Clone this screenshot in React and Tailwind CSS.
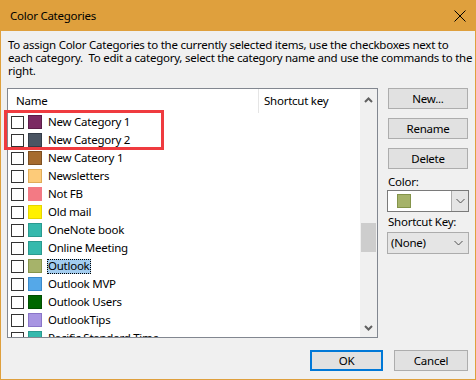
import React from "react";

const font = { fontFamily: '"Noto Sans", "Open Sans", sans-serif' };

const categories = [
  { name: "New Category 1", fill: "bg-[#7b2a63]", edge: "border-[#5c1d49]" },
  { name: "New Category 2", fill: "bg-[#4b5563]", edge: "border-[#343c48]" },
  { name: "New Cateory 1", fill: "bg-[#a66b2e]", edge: "border-[#7d5022]" },
  { name: "Newsletters", fill: "bg-[#fdcb79]", edge: "border-[#e0ac58]" },
  { name: "Not FB", fill: "bg-[#f37a84]", edge: "border-[#f37a84]" },
  { name: "Old mail", fill: "bg-[#fff100]", edge: "border-[#e6d500]" },
  { name: "OneNote book", fill: "bg-[#35b9ad]", edge: "border-[#2a9a8f]" },
  { name: "Online Meeting", fill: "bg-[#35b9ad]", edge: "border-[#2a9a8f]" },
  { name: "Outlook", fill: "bg-[#a6b36a]", edge: "border-[#84944a]", selected: true },
  { name: "Outlook MVP", fill: "bg-[#55a8e8]", edge: "border-[#3a8acb]" },
  { name: "Outlook Users", fill: "bg-[#006600]", edge: "border-[#004d00]" },
  { name: "OutlookTips", fill: "bg-[#a895e2]", edge: "border-[#8a75c8]" },
  { name: "Pacific Standard Time", fill: "bg-[#35b9ad]", edge: "border-[#2a9a8f]" },
];

const Chevron = ({ className = "" }) => (
  <svg width="9" height="6" viewBox="0 0 9 6" className={className}>
    <polyline points="0.5,1 4.5,5 8.5,1" fill="none" stroke="currentColor" strokeWidth="1" />
  </svg>
);

const ScrollArrow = ({ up = false }) => (
  <svg width="9" height="6" viewBox="0 0 9 6">
    <polyline
      points={up ? "1,5 4.5,1.5 8,5" : "1,1 4.5,4.5 8,1"}
      fill="none"
      stroke="#606060"
      strokeWidth="2"
    />
  </svg>
);

const Button = ({ children, className = "" }) => (
  <div
    className={`h-[21px] flex items-center justify-center bg-[#e1e1e1] border border-[#adadad] text-[11.5px] text-black ${className}`}
  >
    {children}
  </div>
);

const CategoryRow = ({ item }) => (
  <div className="h-[18px] flex items-center shrink-0">
    <div className="ml-[3px] w-[13px] h-[13px] border border-[#333333] bg-white" />
    <div className={`ml-[4px] w-[14px] h-[14px] border ${item.fill} ${item.edge}`} />
    {item.selected ? (
      <span className="ml-[5px] px-[1px] h-[15px] leading-[14px] bg-[#a3cdf0] outline-1 outline-dotted outline-black -outline-offset-1 text-[11.5px] whitespace-nowrap">
        {item.name}
      </span>
    ) : (
      <span className="ml-[6px] text-[11.5px] leading-[18px] whitespace-nowrap">{item.name}</span>
    )}
  </div>
);

export default function App() {
  return (
    <div
      style={font}
      className="w-[476px] h-[380px] flex flex-col bg-[#f0f0f0] border-x border-b border-[#dfa03d] text-black tracking-[-0.25px]"
    >
      {/* title bar */}
      <div className="h-[31px] shrink-0 bg-[#dfa03d] flex items-center justify-between pl-[9px] pr-[9px]">
        <span className="text-[11.5px]">Color Categories</span>
        <svg width="12" height="12" viewBox="0 0 12 12">
          <path d="M0.5 0.5 L11.5 11.5 M11.5 0.5 L0.5 11.5" stroke="#000" strokeWidth="1" />
        </svg>
      </div>

      <div className="flex-1 flex flex-col px-[6px] pt-[7px]">
        <p className="pl-[1px] text-[11.5px] leading-[13px] whitespace-nowrap">
          To assign Color Categories to the currently selected items, use the checkboxes next to
          <br />
          each category.&nbsp; To edit a category, select the category name and use the commands to the
          <br />
          right.
        </p>

        <div className="mt-[11px] flex">
          {/* list */}
          <div className="relative w-[371px] h-[250px] border border-[#828790] bg-white flex">
            <div className="flex-1 flex flex-col overflow-hidden">
              <div className="h-[24px] shrink-0 flex text-[11.5px]">
                <div className="w-[251px] pl-[8px] flex items-center border-r border-[#e5e5e5]">Name</div>
                <div className="pl-[5px] flex items-center">Shortcut key</div>
              </div>
              {categories.map((c) => (
                <CategoryRow key={c.name} item={c} />
              ))}
            </div>
            <div className="w-[17px] bg-[#f0f0f0] flex flex-col items-center">
              <div className="h-[17px] w-full flex items-center justify-center mt-[2px]">
                <ScrollArrow up />
              </div>
              <div className="mt-[115px] w-[15px] h-[29px] bg-[#cdcdcd]" />
              <div className="mt-auto h-[17px] w-full flex items-center justify-center mb-[1px]">
                <ScrollArrow />
              </div>
            </div>

            {/* annotation */}
            <div className="absolute left-[-4px] top-[21px] w-[160px] h-[40px] border-[3px] border-[#ef3b3f]" />
          </div>

          {/* right column */}
          <div className="ml-[9px] w-[82px] flex flex-col">
            <Button className="ml-[1px] w-[80px]">New...</Button>
            <Button className="ml-[1px] w-[80px] mt-[9px]">Rename</Button>
            <Button className="ml-[1px] w-[80px] mt-[9px]">Delete</Button>
            <div className="mt-[5px] h-[15px] pl-[1px] text-[11.5px] leading-[15px]">Color:</div>
            <div className="mt-[1px] h-[22px] w-[82px] flex border border-[#7a7a7a] bg-white">
              <div className="flex-1 flex items-center pl-[9px]">
                <div className="w-[14px] h-[14px] bg-[#a6b36a] border border-[#84944a]" />
              </div>
              <div className="w-[17px] bg-[#e5e5e5] border-l border-[#acacac] flex items-center justify-center text-[#505050]">
                <Chevron />
              </div>
            </div>
            <div className="mt-[2px] h-[15px] pl-[1px] text-[11.5px] leading-[15px]">Shortcut Key:</div>
            <div className="mt-[3px] h-[22px] w-[82px] flex items-center justify-between bg-[#e5e5e5] border border-[#acacac] pl-[3px] pr-[5px] text-[11.5px]">
              <span>(None)</span>
              <Chevron className="text-[#505050]" />
            </div>
          </div>
        </div>

        <div className="mt-[12px] flex justify-end gap-[11px] pr-[1px]">
          <div className="w-[73px] h-[21px] flex items-center justify-center bg-[#e1e1e1] border-2 border-[#0078d7] text-[11.5px]">
            OK
          </div>
          <Button className="w-[74px]">Cancel</Button>
        </div>
      </div>
    </div>
  );
}
